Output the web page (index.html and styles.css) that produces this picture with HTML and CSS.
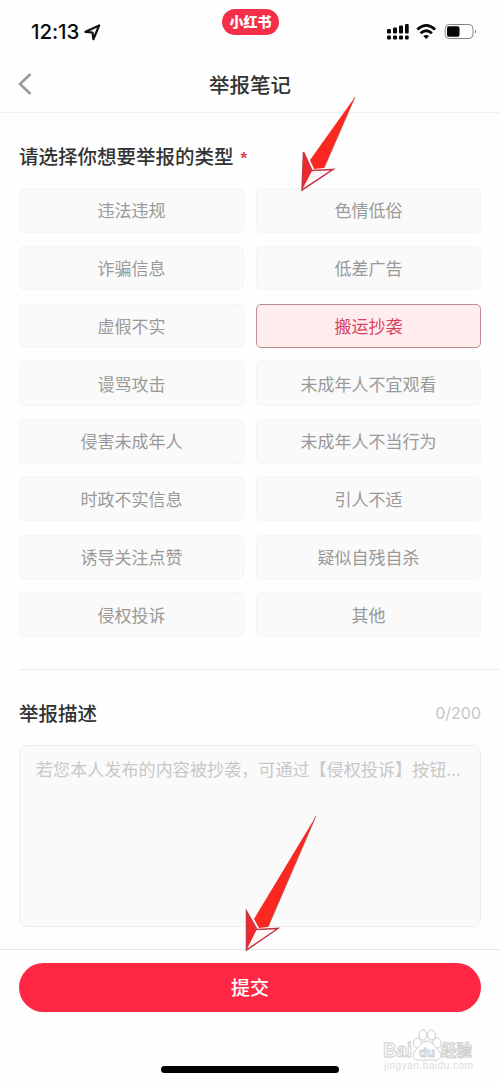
FILE: index.html
```html
<!DOCTYPE html>
<html lang="zh-CN">
<head>
<meta charset="utf-8">
<title>举报笔记</title>
<link rel="stylesheet" href="styles.css">
</head>
<body>
<div class="screen">
  <header class="status">
    <div class="clock"><span>12:13</span>
      <svg width="17" height="17" viewBox="0 0 17 17"><path d="M1.5 7.8 15.2 1.4 9.4 15.2 8.5 8.5Z" fill="none" stroke="#111" stroke-width="2.2" stroke-linejoin="round"/></svg>
    </div>
    <div class="brand">小红书</div>
    <svg class="signals" width="92" height="20" viewBox="0 0 92 20">
      <g fill="#080808">
        <rect x="1" y="7" width="4" height="4.5" rx="1"/><rect x="7" y="5.5" width="4" height="6" rx="1"/><rect x="13" y="3.5" width="4" height="8" rx="1"/><rect x="19" y="2" width="3.7" height="9.5" rx="1"/>
        <rect x="1" y="13.5" width="4" height="4" rx="1.2"/><rect x="7" y="13.5" width="4" height="4" rx="1.2"/><rect x="13" y="13.5" width="4" height="4" rx="1.2"/><rect x="19" y="13.5" width="3.7" height="4" rx="1.2"/>
        <path d="M37.3 13.9Q40.2 12 43.1 13.9L40.2 17Z"/><rect x="61" y="4.3" width="12.5" height="10.5" rx="1.8"/><path d="M89 7.5q2.2 2 0 4Z" fill="#777"/>
      </g>
      <path d="M31.3 7.5Q40.2-.8 49.1 7.5M34.5 11.2Q40.2 6.2 45.9 11.2" fill="none" stroke="#080808" stroke-width="2.8"/>
      <rect x="59.2" y="2.5" width="27.8" height="14" rx="4" fill="none" stroke="#858585"/>
    </svg>
  </header>
  <nav class="navbar">
    <svg class="back" width="16" height="24" viewBox="0 0 16 24"><path d="M13.5 2 3 12l10.5 10" fill="none" stroke="#999" stroke-width="2.5"/></svg>
    <h1>举报笔记</h1>
  </nav>
  <main class="content">
    <h2 class="title">请选择你想要举报的类型<span class="required">*</span></h2>
    <div class="options">
      <div class="option">违法违规</div><div class="option">色情低俗</div>
      <div class="option">诈骗信息</div><div class="option">低差广告</div>
      <div class="option">虚假不实</div><div class="option selected">搬运抄袭</div>
      <div class="option">谩骂攻击</div><div class="option">未成年人不宜观看</div>
      <div class="option">侵害未成年人</div><div class="option">未成年人不当行为</div>
      <div class="option">时政不实信息</div><div class="option">引人不适</div>
      <div class="option">诱导关注点赞</div><div class="option">疑似自残自杀</div>
      <div class="option">侵权投诉</div><div class="option">其他</div>
    </div>
    <section class="description">
      <div class="row"><h2 class="title">举报描述</h2><span class="count">0/200</span></div>
      <div class="field">若您本人发布的内容被抄袭，可通过【侵权投诉】按钮...</div>
    </section>
  </main>
  <footer class="footer">
    <div class="submit">提交</div>
    <div class="home"></div>
  </footer>

  <svg class="arrow arrow-top" width="60" height="98" viewBox="0 0 60 98">
    <path d="M56 1 11 64 15 73 25 72Z" fill="#fb2822"/>
    <path d="M56 1 25 72" stroke="#b8504c" stroke-width=".8"/>
    <path d="M4.5 56 13 75 3 94Z" fill="#ed2930"/>
    <path d="M4.5 56 13 74.5 34 73.5 3 94Z" fill="none" stroke="#c43742" stroke-width="1.5"/>
    <path d="M14 76 30 75 5.5 91Z" fill="#fff7f5"/>
  </svg>
  <svg class="arrow arrow-bottom" width="74" height="138" viewBox="0 0 74 138">
    <path d="M72 1 10 104 15 113 24 112Z" fill="#fb2822"/>
    <path d="M72 1 24 112" stroke="#b8504c" stroke-width=".8"/>
    <path d="M2.5 96 12.5 115 2.5 135Z" fill="#ed2930"/>
    <path d="M2.5 96 13 114.5 34 113.5 2.5 135Z" fill="none" stroke="#c43742" stroke-width="1.5"/>
    <path d="M13.5 116 29 115 5 131.5Z" fill="#fff7f5"/>
  </svg>
  <svg class="watermark" width="96" height="48" viewBox="0 0 96 48">
    <g fill="#fff" stroke="#cecece" stroke-width="1">
      <ellipse cx="37.5" cy="16" rx="4" ry="5"/><ellipse cx="43" cy="8" rx="4" ry="5"/><ellipse cx="51.5" cy="8" rx="4" ry="5"/><ellipse cx="57" cy="16" rx="4" ry="5"/>
      <path d="M47 14c-5 0-8 6-12 10-4 5-1 10 5 9h14c6 1 9-4 5-9-4-4-7-10-12-10Z"/>
      <text class="wm-latin" x="3" y="30" textLength="29" lengthAdjust="spacingAndGlyphs">Bai</text>
      <text class="wm-du" x="39" y="30" textLength="16">du</text>
      <text class="wm-cjk" x="61" y="29" textLength="31">经验</text>
    </g>
    <text class="wm-url" x="4" y="42" textLength="89">jingyan.baidu.com</text>
  </svg>
</div>
</body>
</html>
```
FILE: styles.css
```css
* { box-sizing: border-box; }
body { margin: 0; background: #fefefe; font-family: "Noto Sans CJK SC", sans-serif; }
.screen { position: relative; width: 500px; height: 1083px; overflow: hidden; display: flex; flex-direction: column; }
.status, .navbar, .content, .footer { flex: none; }
h1, h2 { margin: 0; font-weight: 500; color: #333; }
.status { height: 56px; display: grid; grid-template-columns: 1fr 57px 1fr; padding: 0 22px 0 31px; }
.clock { display: flex; align-items: flex-start; gap: 5px; padding-top: 23px; font: 500 20.5px/18px Inter, sans-serif; color: #0b0b0b; letter-spacing: -.1px; }
.clock svg { margin-top: 1px; }
.brand { width: 57px; height: 26px; margin-top: 9px; margin-left: -4px; border-radius: 13px; background: #f52f49; color: #fff; font-size: 14px; font-weight: 900; line-height: 25px; text-align: center; }
.signals { justify-self: end; margin-top: 22px; }
.navbar { height: 57px; display: grid; grid-template-columns: 40px 1fr 40px; align-items: center; padding: 0 17px; border-bottom: 1px solid #f1f1f1; }
.navbar h1 { margin-top: -1px; font-size: 20.5px; line-height: 30px; text-align: center; }
.content { padding: 28px 19px 22px; border-bottom: 1px solid #e8e8e8; height: 837px; }
.title { font-size: 19.5px; line-height: 30px; }
.required { margin-left: 7px; color: #dc4357; font: bold 17px/20px "Liberation Sans", sans-serif; }
.options { display: grid; grid-template-columns: 1fr 1fr; grid-auto-rows: 44.5px; gap: 13.25px 12px; margin-top: 17px; }
.option { display: flex; align-items: center; justify-content: center; border: 1px solid #f5f5f5; border-radius: 5px; background: #fafafa; color: #999; font-size: 17px; line-height: 24px; }
.option.selected { color: #dc3f61; background: #ffeded; border-color: #bd8c93; }
.description { margin-top: 32.5px; margin-right: -19px; padding: 28px 19px 0 0; border-top: 1px solid #ececec; }
.row { display: flex; align-items: center; justify-content: space-between; }
.count { color: #c5c5c5; font: 16px/24px Inter, sans-serif; }
.field { height: 182px; margin-top: 17px; padding: 10px 16px; border: 1px solid #efefef; border-radius: 7px; background: #fafafa; color: #c8c8c8; font-size: 17px; line-height: 25px; letter-spacing: .1px; white-space: nowrap; }
.footer { display: flex; flex-direction: column; align-items: center; padding: 12.5px 19px 10px; }
.submit { width: 100%; height: 49px; border-radius: 25px; background: #ff2744; color: #fff; font-size: 19px; font-weight: 500; line-height: 48px; text-align: center; }
.home { width: 178px; height: 7px; margin-top: 54.5px; border-radius: 4px; background: #000; }
.arrow, .watermark { position: absolute; }
.arrow-top { left: 299px; top: 96px; }
.arrow-bottom { left: 244px; top: 815px; }
.watermark { left: 380px; top: 1027px; }
.wm-latin { font: bold 21px "Liberation Sans", sans-serif; }
.wm-du { font: bold 13px "Liberation Sans", sans-serif; }
.wm-cjk { font: bold 15.5px "Noto Sans CJK SC", sans-serif; }
.wm-url { font: 10px "Liberation Sans", sans-serif; fill: #ddd; }
```
